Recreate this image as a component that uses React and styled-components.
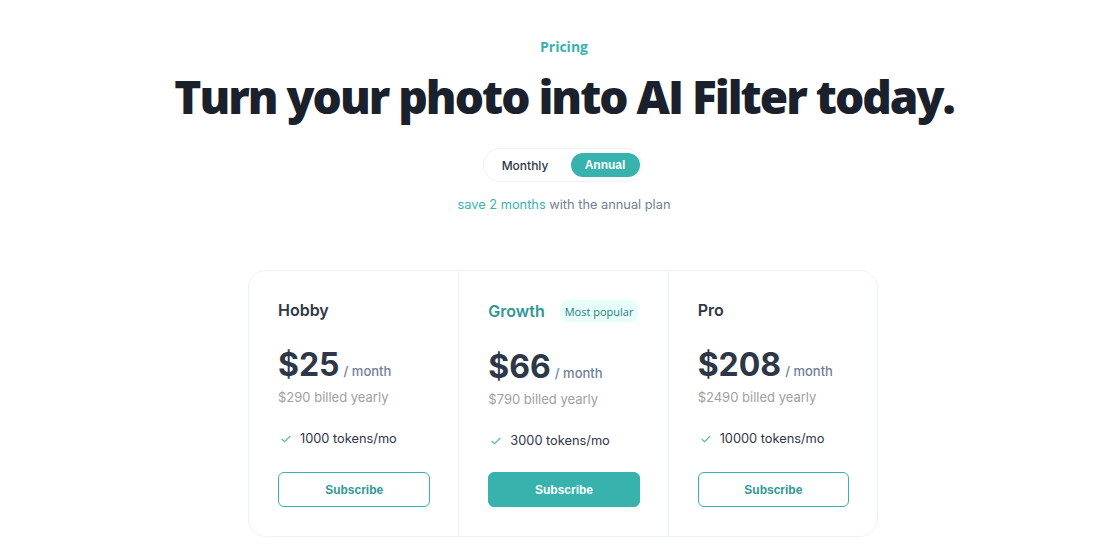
import React from "react";
import styled, { createGlobalStyle } from "styled-components";

const Global = createGlobalStyle`
  body { margin: 0; background: #fff; font-family: Inter, "Liberation Sans", sans-serif; color: #2d3748; }
`;

const Page = styled.main`
  display: flex;
  flex-direction: column;
  align-items: center;
  padding: 38px 0 0 30px;
`;

const Eyebrow = styled.div`
  font-family: "Open Sans", sans-serif;
  font-size: 14px;
  font-weight: 700;
  color: #38b2ac;
  line-height: 18px;
`;

const Title = styled.h1`
  margin: 14px 0 0;
  font-family: "Open Sans", sans-serif;
  font-size: 46px;
  font-weight: 800;
  line-height: 52px;
  color: #1a202c;
  letter-spacing: -2px;
  white-space: nowrap;
`;

const Toggle = styled.div`
  margin: 26px 4px 0 0;
  display: flex;
  gap: 8px;
  padding: 4px 1px 4px 4px;
  border: 1px solid #edf2f7;
  border-radius: 999px;
  background: #fff;
`;

const ToggleButton = styled.button`
  border: none;
  height: 24px;
  padding: 0 12px;
  border-radius: 999px;
  font-family: ${(p) => (p.$active ? '"Liberation Sans", Arial, sans-serif' : "Inter, sans-serif")};
  font-size: 12px;
  font-weight: ${(p) => (p.$active ? 700 : 500)};
  background: ${(p) => (p.$active ? "#38b2ac" : "transparent")};
  color: ${(p) => (p.$active ? "#fff" : "#2d3748")};
  min-width: ${(p) => (p.$active ? "69px" : "75px")};
  cursor: pointer;
`;

const SaveNote = styled.p`
  margin: 13px 0 0;
  font-size: 12.8px;
  line-height: 20px;
  color: #718096;
`;

const Accent = styled.span`
  color: #38b2ac;
`;

const Plans = styled.section`
  box-sizing: border-box;
  width: 630px;
  margin: 55px 2px 0 0;
  display: grid;
  grid-template-columns: repeat(3, 1fr);
  border: 1px solid #edf2f7;
  border-radius: 18px;
  background: #fff;
`;

const Plan = styled.article`
  display: flex;
  flex-direction: column;
  padding: 27px 28px 29px 29px;
  & + & {
    border-left: 1px solid #edf2f7;
  }
`;

const PlanHeader = styled.div`
  display: flex;
  align-items: center;
  gap: 15px;
  min-height: 24px;
`;

const PlanName = styled.h2`
  margin: 0;
  font-size: 16px;
  line-height: 24px;
  font-weight: 600;
  color: ${(p) => (p.$featured ? "#319795" : "#2d3748")};
`;

const Badge = styled.span`
  display: inline-flex;
  align-items: center;
  white-space: nowrap;
  height: 22px;
  margin: 2px 0;
  padding: 0 5px;
  border-radius: 8px;
  background: #e6fffa;
  color: #2c7a7b;
  font-family: "Open Sans", sans-serif;
  font-size: 11px;
  font-weight: 500;
`;

const PriceRow = styled.div`
  margin-top: 23px;
  display: flex;
  align-items: baseline;
  gap: 4px;
`;

const Amount = styled.span`
  font-size: 32px;
  line-height: 40px;
  font-weight: 700;
  color: #2d3748;
`;

const Period = styled.span`
  font-size: 13px;
  font-weight: 500;
  color: #718096;
`;

const Billed = styled.div`
  font-size: 13px;
  line-height: 20px;
  color: #a0a0a0;
  margin-top: 2px;
`;

const Feature = styled.div`
  margin-top: 22px;
  display: flex;
  align-items: center;
  gap: 8px;
  font-size: 12.8px;
  line-height: 20px;
  color: #2d3748;
  padding-left: 2px;
`;

const Subscribe = styled.button`
  margin-top: auto;
  height: 35px;
  width: 100%;
  border-radius: 6px;
  border: 1px solid #38b2ac;
  background: ${(p) => (p.$primary ? "#38b2ac" : "#fff")};
  color: ${(p) => (p.$primary ? "#fff" : "#319795")};
  font-family: "Liberation Sans", Arial, sans-serif;
  font-size: 12px;
  font-weight: 700;
  cursor: pointer;
`;

const Spacer = styled.div`
  height: 23px;
  flex: none;
`;

const Check = () => (
  <svg width="12" height="12" viewBox="0 0 24 24" fill="none" stroke="#4fbdb6" strokeWidth="2.2" strokeLinecap="round" strokeLinejoin="round">
    <path d="M4 12.5l5 5L20 6.5" />
  </svg>
);

const plans = [
  { name: "Hobby", price: "$25", yearly: "$290", tokens: "1000" },
  { name: "Growth", price: "$66", yearly: "$790", tokens: "3000", featured: true },
  { name: "Pro", price: "$208", yearly: "$2490", tokens: "10000" },
];

export default function App() {
  return (
    <>
      <Global />
      <Page>
        <Eyebrow>Pricing</Eyebrow>
        <Title>Turn your photo into AI Filter today.</Title>
        <Toggle>
          <ToggleButton>Monthly</ToggleButton>
          <ToggleButton $active>Annual</ToggleButton>
        </Toggle>
        <SaveNote>
          <Accent>save 2 months</Accent> with the annual plan
        </SaveNote>
        <Plans>
          {plans.map((p) => (
            <Plan key={p.name}>
              <PlanHeader>
                <PlanName $featured={p.featured}>{p.name}</PlanName>
                {p.featured && <Badge>Most popular</Badge>}
              </PlanHeader>
              <PriceRow>
                <Amount>{p.price}</Amount>
                <Period>/ month</Period>
              </PriceRow>
              <Billed>{p.yearly} billed yearly</Billed>
              <Feature>
                <Check />
                {p.tokens} tokens/mo
              </Feature>
              {!p.featured && <Spacer />}
              <Subscribe $primary={p.featured}>Subscribe</Subscribe>
            </Plan>
          ))}
        </Plans>
      </Page>
    </>
  );
}
